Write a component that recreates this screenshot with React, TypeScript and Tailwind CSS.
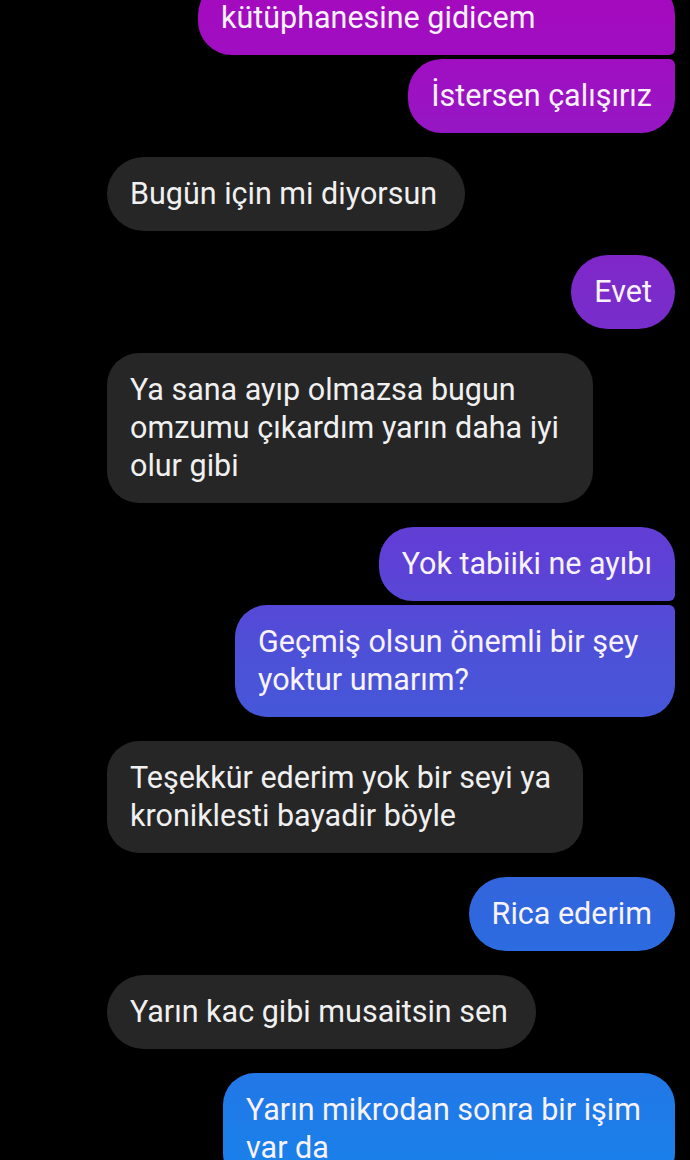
import React from "react";

type Msg = {
  lines: string[];
  mine: boolean;
  shape: string;
  width?: string;
  gap: string;
};

// sent bubbles share one fixed gradient, like messenger does
const sentBg =
  "bg-fixed bg-[linear-gradient(180deg,#a40abe_0%,#9c12c3_8%,#7b2bca_25%,#5f40d6_48%,#4c52d8_57%,#2f68de_79%,#1a80ea_100%)]";

const msgs: Msg[] = [
  { lines: ["kütüphanesine gidicem"], mine: true, shape: "rounded-[34px] rounded-br-[6px]", width: "w-[477px]", gap: "-mt-[19px]" },
  { lines: ["İstersen çalışırız"], mine: true, shape: "rounded-[34px] rounded-tr-[6px]", gap: "mt-[4px]" },
  { lines: ["Bugün için mi diyorsun"], mine: false, shape: "rounded-[37px]", gap: "mt-[24px]" },
  { lines: ["Evet"], mine: true, shape: "rounded-[37px]", gap: "mt-[24px]" },
  {
    lines: ["Ya sana ayıp olmazsa bugun", "omzumu çıkardım yarın daha iyi", "olur gibi"],
    mine: false,
    shape: "rounded-[32px]",
    width: "w-[486px]",
    gap: "mt-[24px]",
  },
  { lines: ["Yok tabiiki ne ayıbı"], mine: true, shape: "rounded-[34px] rounded-br-[6px]", gap: "mt-[24px]" },
  {
    lines: ["Geçmiş olsun önemli bir şey", "yoktur umarım?"],
    mine: true,
    shape: "rounded-[32px] rounded-tr-[6px]",
    width: "w-[440px]",
    gap: "mt-[4px]",
  },
  {
    lines: ["Teşekkür ederim yok bir seyi ya", "kroniklesti bayadir böyle"],
    mine: false,
    shape: "rounded-[32px]",
    width: "w-[476px]",
    gap: "mt-[24px]",
  },
  { lines: ["Rica ederim"], mine: true, shape: "rounded-[37px]", gap: "mt-[24px]" },
  { lines: ["Yarın kac gibi musaitsin sen"], mine: false, shape: "rounded-[37px]", gap: "mt-[24px]" },
  {
    lines: ["Yarın mikrodan sonra bir işim", "var da"],
    mine: true,
    shape: "rounded-[32px]",
    width: "w-[452px]",
    gap: "mt-[24px]",
  },
];

const Bubble = ({ m }: { m: Msg }) => (
  <div className={`flex ${m.mine ? "justify-end" : "justify-start"} ${m.gap}`}>
    <div
      className={`${m.shape} ${m.width ?? ""} py-[18px] text-[30.5px] leading-[38px] whitespace-nowrap ${
        m.mine ? `${sentBg} px-[23px] text-[#f8f2fa]` : "bg-[#262626] pl-[23px] pr-[28px] text-[#f0f0f0]"
      }`}
    >
      {m.lines.map((l, i) => (
        <div key={i}>{l}</div>
      ))}
    </div>
  </div>
);

export default function App() {
  return (
    <div className="h-[1160px] w-[690px] overflow-hidden bg-black font-['Roboto',sans-serif]">
      <div className="flex flex-col pl-[107px] pr-[15px]">
        {msgs.map((m, i) => (
          <Bubble key={i} m={m} />
        ))}
      </div>
    </div>
  );
}
